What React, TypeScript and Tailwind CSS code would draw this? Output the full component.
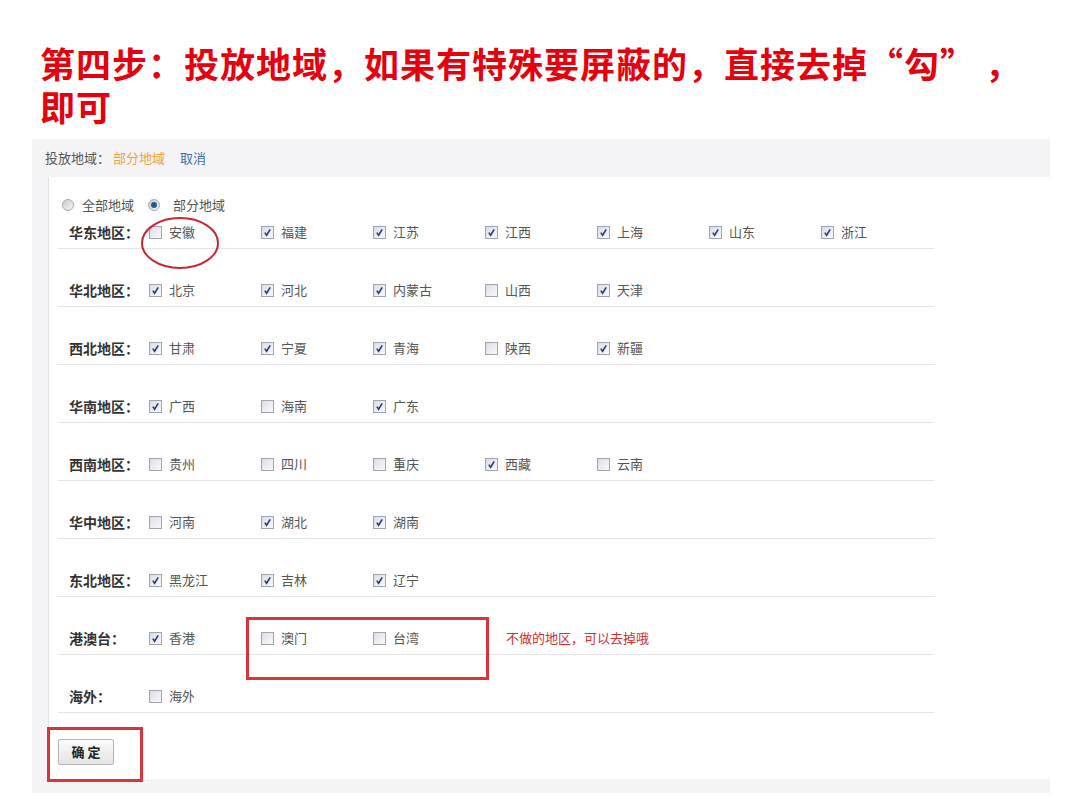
const CJK = "font-['Noto_Sans_CJK_SC','Noto_Sans',sans-serif]";

type Item = { name: string; on: boolean };
type Region = { label: string; items: Item[] };

const regions: Region[] = [
  {
    label: "华东地区：",
    items: [
      { name: "安徽", on: false },
      { name: "福建", on: true },
      { name: "江苏", on: true },
      { name: "江西", on: true },
      { name: "上海", on: true },
      { name: "山东", on: true },
      { name: "浙江", on: true },
    ],
  },
  {
    label: "华北地区：",
    items: [
      { name: "北京", on: true },
      { name: "河北", on: true },
      { name: "内蒙古", on: true },
      { name: "山西", on: false },
      { name: "天津", on: true },
    ],
  },
  {
    label: "西北地区：",
    items: [
      { name: "甘肃", on: true },
      { name: "宁夏", on: true },
      { name: "青海", on: true },
      { name: "陕西", on: false },
      { name: "新疆", on: true },
    ],
  },
  {
    label: "华南地区：",
    items: [
      { name: "广西", on: true },
      { name: "海南", on: false },
      { name: "广东", on: true },
    ],
  },
  {
    label: "西南地区：",
    items: [
      { name: "贵州", on: false },
      { name: "四川", on: false },
      { name: "重庆", on: false },
      { name: "西藏", on: true },
      { name: "云南", on: false },
    ],
  },
  {
    label: "华中地区：",
    items: [
      { name: "河南", on: false },
      { name: "湖北", on: true },
      { name: "湖南", on: true },
    ],
  },
  {
    label: "东北地区：",
    items: [
      { name: "黑龙江", on: true },
      { name: "吉林", on: true },
      { name: "辽宁", on: true },
    ],
  },
  {
    label: "港澳台：",
    items: [
      { name: "香港", on: true },
      { name: "澳门", on: false },
      { name: "台湾", on: false },
    ],
  },
  { label: "海外：", items: [{ name: "海外", on: false }] },
];

function Check({ on }: { on: boolean }) {
  return (
    <span className="flex h-[13px] w-[13px] shrink-0 items-center justify-center border border-[#a3a3ad] bg-gradient-to-br from-[#dcdce6] to-[#fafafc]">
      {on && (
        <svg width="9" height="9" viewBox="0 0 9 9">
          <path d="M1.8 4.6 L3.6 7.2 L7.2 1.4" fill="none" stroke="#2b3a86" strokeWidth="1.6" />
        </svg>
      )}
    </span>
  );
}

function Radio({ on }: { on: boolean }) {
  return (
    <span className="flex h-[12px] w-[12px] items-center justify-center rounded-full border border-[#a8a8b0] bg-gradient-to-br from-[#c9c9cf] to-[#f7f7f9]">
      {on && <span className="h-[6px] w-[6px] rounded-full bg-[#1f5f86]" />}
    </span>
  );
}

export default function App() {
  return (
    <div className={`min-h-[810px] w-[1080px] bg-white ${CJK}`}>
      <h1 className="pl-[40px] pt-[41px] text-[35px] font-bold leading-[43px] tracking-[1px] text-[#e5000e] [text-spacing-trim:space-all]">
        第四步：投放地域，如果有特殊要屏蔽的，直接去掉“勾” ，
        <br />
        即可
      </h1>

      <div className="ml-[32px] mt-[12px] w-[1018px] bg-[#f4f4f6] pb-[14px]">
        <div className="flex h-[38px] items-center gap-[3px] pl-[13px] text-[13px]">
          <span className="text-[#555]">投放地域：</span>
          <span className="text-[#f0a23c]">部分地域</span>
          <span className="ml-[12px] text-[#3f6ea6]">取消</span>
        </div>

        <div className="relative ml-[16px] border-l border-[#e2e2e6] bg-white pb-[14px] pl-[9px]">
          <div className="box-content flex h-[16px] items-center pl-[4px] pt-[20px] text-[13px] text-[#555]">
            <Radio on={false} />
            <span className="ml-[8px]">全部地域</span>
            <span className="ml-[14px]">
              <Radio on={true} />
            </span>
            <span className="ml-[13px]">部分地域</span>
          </div>

          <div className="mt-[3px] flex flex-col gap-[25px]">
            {regions.map((r) => (
              <div key={r.label} className="flex h-[33px] w-[876px] items-center border-b border-[#e3e3e6] pl-[11px]">
                <span className="w-[80px] text-[14px] font-bold text-[#333]">{r.label}</span>
                {r.items.map((it) => (
                  <span key={it.name} className="flex w-[112px] items-center gap-[7px] text-[13px] text-[#555]">
                    <Check on={it.on} />
                    {it.name}
                  </span>
                ))}
                {r.label === "港澳台：" && (
                  <span className="ml-[21px] text-[13px] text-[#d23030]">不做的地区，可以去掉哦</span>
                )}
              </div>
            ))}
          </div>

          <div className="mt-[26px] flex">
            <button className="h-[26px] w-[56px] rounded-[2px] border border-[#b5b5b5] bg-gradient-to-b from-[#fbfbfb] to-[#e4e4e4] text-[13px] font-bold text-[#222]">
              确 定
            </button>
          </div>

          <svg className="absolute left-[91px] top-[39px]" width="80" height="54" viewBox="0 0 80 54">
            <ellipse cx="40" cy="27" rx="38" ry="25" fill="none" stroke="#c32a30" strokeWidth="2" />
          </svg>
          <div className="absolute left-[197px] top-[440px] h-[63px] w-[243px] border-[3px] border-[#d8343a]" />
          <div className="absolute left-[-2px] top-[550px] h-[55px] w-[96px] border-[3px] border-[#d8343a]" />
        </div>
      </div>
    </div>
  );
}
